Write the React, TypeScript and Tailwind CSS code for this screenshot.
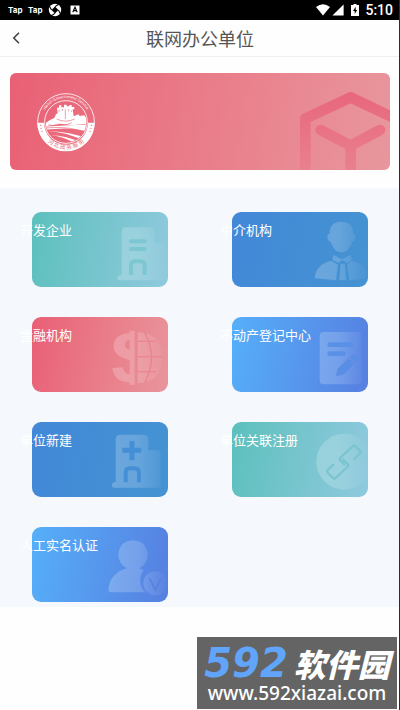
import type { ReactNode } from "react";

type Card = {
  title: string;
  background: string;
  icon: ReactNode;
};

const teal = "bg-linear-100 from-[#5bc0bd] to-[#8fc9de]";
const blue = "bg-linear-100 from-[#4288d8] to-[#4593d2]";
const pink = "bg-linear-100 from-[#e95f75] to-[#e8959c]";
const azure = "bg-linear-100 from-[#55aff9] to-[#567fe0]";

const cards: Card[] = [
  { title: "开发企业", background: teal, icon: <OfficeIcon /> },
  { title: "中介机构", background: blue, icon: <AgentIcon /> },
  { title: "金融机构", background: pink, icon: <FinanceIcon /> },
  { title: "不动产登记中心", background: azure, icon: <DocumentIcon /> },
  { title: "单位新建", background: blue, icon: <HospitalIcon /> },
  { title: "单位关联注册", background: teal, icon: <LinkIcon /> },
  { title: "人工实名认证", background: azure, icon: <VerifiedIcon /> },
];

export default function App() {
  return (
    <div className="relative flex min-h-screen flex-col bg-[#fefefe] font-['Noto_Sans_CJK_SC',sans-serif]">
      <StatusBar />
      <header className="grid h-[37px] grid-cols-[40px_1fr_40px] items-center border-b border-[#f0f0f0]">
        <button aria-label="返回" className="flex h-full items-center pl-3">
          <svg className="h-3 w-2" viewBox="0 0 8 12" fill="none" stroke="#444" strokeWidth="1.6">
            <path d="M7 .8 1.8 6 7 11.2" />
          </svg>
        </button>
        <h1 className="text-center text-[18px] leading-6 text-[#555]">联网办公单位</h1>
      </header>

      <main>
        <section className="px-[10px] pt-4 pb-[18px]">
          <div className="flex h-[97px] items-center justify-between overflow-hidden rounded-md bg-linear-100 from-[#e96075] to-[#e8969d] pl-[26px]">
            <Emblem />
            <CubeIcon />
          </div>
        </section>
        <section className="grid grid-cols-2 gap-y-[30px] bg-[#f5f9fd] pt-6 pb-[5px]">
          {cards.map((card) => (
            <button key={card.title} className="relative px-8 text-left">
              <span
                className={`flex h-[75px] justify-end overflow-hidden rounded-[9px] ${card.background}`}
              >
                {card.icon}
              </span>
              <span className="absolute top-2 left-5 text-[13px] leading-5 whitespace-nowrap text-white">
                {card.title}
              </span>
            </button>
          ))}
        </section>
      </main>

      <footer className="mt-[30px] mr-[3px] flex h-[72px] w-[200px] flex-col items-center self-end bg-[#646464]">
        <div className="flex h-11 items-center gap-[6px] pt-2 whitespace-nowrap italic">
          <span className="font-['DejaVu_Sans',sans-serif] text-[40px] leading-8 font-bold text-[#60a5fa]">
            592
          </span>
          <span className="text-[32px] leading-8 font-black text-white">软件园</span>
        </div>
        <a
          href="#"
          className="font-['Noto_Sans',sans-serif] text-[19px] leading-6 font-medium text-white"
        >
          www.592xiazai.com
        </a>
      </footer>
      <div className="absolute inset-y-0 right-0 w-px bg-[#2b2d30]" />
    </div>
  );
}

function StatusBar() {
  return (
    <div className="flex h-5 items-center justify-between bg-black pr-[7px] pl-2 text-white">
      <div className="flex items-center gap-[6px]">
        <span className="w-[14px] font-['Inter',sans-serif] text-[8px] leading-3 font-bold">Tap</span>
        <span className="w-[14px] font-['Inter',sans-serif] text-[8px] leading-3 font-bold">Tap</span>
        <svg className="size-[14px]" viewBox="0 0 14 14">
          <circle cx="7" cy="7" r="6.2" fill="#fff" />
          <path d="M7 3.6 10.4 7 7 10.4 3.6 7Z" fill="#000" />
          <path
            d="M7 3.6 10.8 1.2M10.4 7l2.2 4M7 10.4l-3.8 2.4M3.6 7 1.3 3"
            stroke="#000"
            strokeWidth="1.1"
          />
        </svg>
        <svg className="ml-[2px] size-[10px]" viewBox="0 0 10 10">
          <path d="M.5.5h9v9h-9Z" fill="#fff" />
          <path d="m2.8 7.2 2.2-5 2.2 5M3.6 5.6h2.8" fill="none" stroke="#000" strokeWidth="1.1" />
        </svg>
      </div>
      <div className="flex items-center">
        <svg className="h-3 w-[14px]" viewBox="0 0 14 12" fill="#fff">
          <path d="M0 3Q7-2.4 14 3L7 11.6Z" />
        </svg>
        <svg className="ml-[2px] h-3 w-3" viewBox="0 0 12 12" fill="#fff">
          <path d="M11.6.4v11.2H.4Z" />
        </svg>
        <svg className="ml-[7px] h-3 w-2" viewBox="0 0 8 12">
          <path d="M2.5 0h3v1H8v11H0V1h2.5Z" fill="#fff" />
          <path d="M4.7 2.8 2 7h1.7v3L6.2 6H4.7Z" fill="#000" />
        </svg>
        <span className="ml-[6px] font-['Roboto',sans-serif] text-[14px] leading-5 font-medium">
          5:10
        </span>
      </div>
    </div>
  );
}

function Emblem() {
  return (
    <svg className="size-[60px]" viewBox="108 93 180 180">
      <defs>
        <path id="emblem-top" d="M126 183a72 72 0 0 1 144 0" />
        <path id="emblem-bottom" d="M117 183a81 81 0 0 0 162 0" />
        <clipPath id="emblem-inner">
          <circle cx="198" cy="183" r="61" />
        </clipPath>
      </defs>
      <circle cx="198" cy="183" r="85" fill="none" stroke="#fff" strokeWidth="2.5" />
      <path d="M112 185a86 86 0 0 0 172 0h-20a66 66 0 0 1-132 0Z" fill="#fff" />
      <circle cx="198" cy="183" r="64" fill="none" stroke="#fff" strokeWidth="2.5" />
      <g clipPath="url(#emblem-inner)">
        <path
          d="m136 187 14-10 13-6 5-11 5-3-2-17h6v-7h7v6h8v-8h8v5h8v-4h7v6h8v7h-5l3 21 14-6 4 5 13-2 12 12v13l-48 5-35-5-43 8Z"
          fill="#fff"
        />
        <path d="M196 145v29M177 146v6M187 144v6M206 145v6M215 148v5" stroke="#e86b7d" strokeWidth="2" />
        <path d="M170 174q27 13 54 0M145 192q45 7 70-7" fill="none" stroke="#e86b7d" strokeWidth="2" />
        <path d="M133 197q61-4 132-7v22q-58-16-130-4Z" fill="#fff" />
        <path
          d="M136 201q55-5 94 5t36 25M136 207q53-5 87 8t40 22"
          fill="none"
          stroke="#e86b7d"
          strokeWidth="2"
        />
        <path
          d="M142 211q71 0 119 23l-7 9q-45-30-112-32ZM149 223q59 0 99 27l-12 8q-33-31-87-35Z"
          fill="#fff"
        />
        <path d="M164 240q34 2 61 20l-24 3q-15-15-37-23Z" fill="#fff" />
      </g>
      <text fill="#fff" fontSize="12" fontFamily="Noto Sans, sans-serif">
        <textPath href="#emblem-top" startOffset="50%" textAnchor="middle">
          Hebei Government Service
        </textPath>
      </text>
      <text fill="#e86b7d" fontSize="17" fontFamily="Noto Sans CJK SC, sans-serif">
        <textPath href="#emblem-bottom" startOffset="50%" textAnchor="middle">
          河 北 政 务 服 务
        </textPath>
      </text>
      <g fill="#e86b7d">
        <circle cx="122" cy="193" r="2" />
        <circle cx="123" cy="202" r="2" />
        <circle cx="126" cy="211" r="2" />
        <circle cx="274" cy="193" r="2" />
        <circle cx="273" cy="202" r="2" />
        <circle cx="270" cy="211" r="2" />
      </g>
    </svg>
  );
}

function CubeIcon() {
  return (
    <svg className="h-[97px] w-[90px]" viewBox="300 39 270 291">
      <defs>
        <linearGradient id="cube" x1="0" y1="90" x2="0" y2="330" gradientUnits="userSpaceOnUse">
          <stop stopColor="#e8667b" />
          <stop offset="1" stopColor="#e9808f" />
        </linearGradient>
      </defs>
      <g fill="none" stroke="url(#cube)" strokeWidth="32" strokeLinejoin="round">
        <path d="M316 350V176L452 112 600 183" />
        <path d="m362 210 90 47 88-47M452 257v90" strokeLinecap="round" />
      </g>
    </svg>
  );
}

function CardIcon({ id, children }: { id: string; children: ReactNode }) {
  return (
    <svg className="h-[75px] w-[60px]" viewBox="325 38 180 225" fill={`url(#${id})`}>
      <defs>
        <linearGradient id={id} x1="335" y1="0" x2="500" y2="0" gradientUnits="userSpaceOnUse">
          <stop stopColor="#fff" stopOpacity=".22" />
          <stop offset=".5" stopColor="#fff" stopOpacity=".18" />
          <stop offset="1" stopColor="#fff" stopOpacity=".02" />
        </linearGradient>
      </defs>
      {children}
    </svg>
  );
}

function OfficeIcon() {
  return (
    <CardIcon id="office">
      <path d="M366 228V98q0-14 14-14h70q14 0 14 14v32h26q12 0 12 12v101H361q-8 0-8-7t8-8Z" />
      <g fill="none" stroke="#7cc7d2" strokeWidth="12" strokeLinecap="round">
        <path d="M394 126h41M394 149h41" />
        <path d="M394 227v-28q0-13 13-13h14q14 0 14 13v28" strokeLinecap="butt" />
      </g>
    </CardIcon>
  );
}

function AgentIcon() {
  return (
    <CardIcon id="agent">
      <path d="M390 103q0-36 35-36t36 36q7 1 6 10-2 14-9 14-11 32-33 32t-32-32q-8 0-10-14 0-9 7-10Z" />
      <path d="m402 167 25 13 25-13 6 14-16 10-13-9-13 9-18-10Z" />
      <path d="m395 184 20 12-6 47-64-6q2-41 50-53ZM423 193h12l5 50h-21ZM443 195l14-11q49 12 53 53l-61 6Z" />
    </CardIcon>
  );
}

function FinanceIcon() {
  return (
    <CardIcon id="finance">
      <path d="M390 79h15v162h-15v-7q-47-1-52-43l31-2q4 20 21 21v-43q-48-11-48-42 0-35 48-39Zm0 27q-14 2-14 15 0 12 14 16Z" />
      <path d="M414 84q73 2 73 76t-73 77Z" />
      <g fill="none" stroke="#e98490" strokeWidth="4">
        <path d="M414 111h54M414 157h73M414 202h55M435 85q41 75 0 150" />
      </g>
    </CardIcon>
  );
}

function DocumentIcon() {
  return (
    <CardIcon id="document">
      <rect x="360" y="83" width="126" height="157" rx="12" />
      <g fill="none" stroke="#5a91e7" strokeWidth="14" strokeLinecap="round">
        <path d="M390 121h66M390 148h41" />
      </g>
      <path
        d="m409 215 4-21 34-32 17 16-33 33ZM451 158l7-6q4-3 8 1l8 8q3 4-1 8l-6 6Z"
        fill="#5a8de5"
      />
    </CardIcon>
  );
}

function HospitalIcon() {
  return (
    <CardIcon id="hospital">
      <path d="M348 219V90q0-14 14-14h69q15 0 15 14v32h25q12 0 12 12v101H344q-7 0-7-8t7-8Z" />
      <g fill="none" stroke="#448fd5" strokeLinejoin="round">
        <path d="M397 95v58M368 123h57" strokeWidth="15" />
        <path d="M378 219v-29q0-13 13-13h13q14 0 14 13v29" strokeWidth="12" />
      </g>
    </CardIcon>
  );
}

function LinkIcon() {
  return (
    <CardIcon id="link">
      <circle cx="434" cy="157" r="84" />
      <g
        fill="none"
        stroke="#7bc5d0"
        strokeWidth="7"
        strokeLinecap="round"
        strokeLinejoin="round"
      >
        <path d="m401 166-16 15q-5 5 0 10l14 14q5 5 10 0l34-32q5-5 0-10l-12-12" />
        <path d="m464 149 16-15q5-5 0-10l-12-12q-5-5-10 0l-35 32q-5 5 0 10l11 11" />
      </g>
    </CardIcon>
  );
}

function VerifiedIcon() {
  return (
    <CardIcon id="verified">
      <path d="M382 162q-25-12-26-39 2-43 44-45 42 2 44 45-1 27-25 39l14 6q-13 14-11 34 1 18 15 32H334q-9 0-8-10 6-48 56-62Z" />
      <circle cx="467" cy="207" r="36" />
      <path d="m450 192 17 35 17-35" fill="none" stroke="#5884e0" strokeWidth="6" />
    </CardIcon>
  );
}
